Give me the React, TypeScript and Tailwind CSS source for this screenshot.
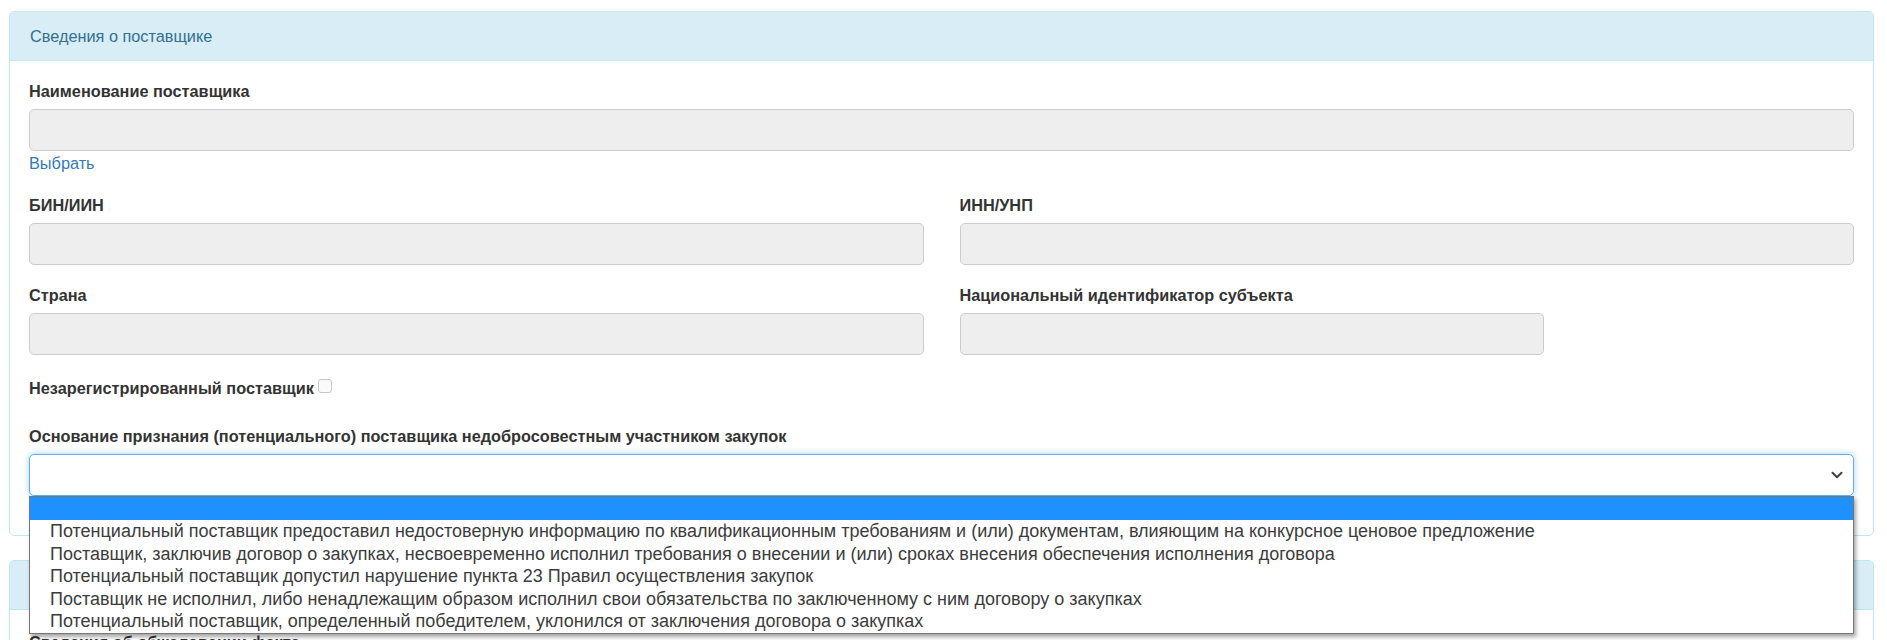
import { ChevronDown } from 'lucide-react';

const options = [
  'Потенциальный поставщик предоставил недостоверную информацию по квалификационным требованиям и (или) документам, влияющим на конкурсное ценовое предложение',
  'Поставщик, заключив договор о закупках, несвоевременно исполнил требования о внесении и (или) сроках внесения обеспечения исполнения договора',
  'Потенциальный поставщик допустил нарушение пункта 23 Правил осуществления закупок',
  'Поставщик не исполнил, либо ненадлежащим образом исполнил свои обязательства по заключенному с ним договору о закупках',
  'Потенциальный поставщик, определенный победителем, уклонился от заключения договора о закупках',
];

function Field({ label, className = '' }: { label: string; className?: string }) {
  return (
    <div className={`mb-[18px] ${className}`}>
      <div className="font-bold leading-[24px] mb-[6px]">{label}</div>
      <div className="h-[42px] bg-[#eeeeee] border border-[#cccccc] rounded-[5px]" />
    </div>
  );
}

export default function App() {
  return (
    <div className="h-[640px] overflow-hidden bg-white text-[#333] text-[16.3px] font-['Liberation_Sans',Arial,sans-serif]">
      <div className="pl-[9px] pr-[13px] pt-[11px]">
        {/* panel: supplier info */}
        <div className="border border-[#bce8f1] rounded-[5px] bg-white">
          <div className="h-[49px] flex items-center px-[20px] bg-[#d9edf7] text-[#31708f] border-b border-[#bce8f1] rounded-t-[4px]">
            Сведения о поставщике
          </div>
          <div className="px-[19px] pt-[18px] pb-[18px]">
            <div className="mb-[18px]">
              <div className="font-bold leading-[24px] mb-[6px]">Наименование поставщика</div>
              <div className="h-[42px] bg-[#eeeeee] border border-[#cccccc] rounded-[5px]" />
              <a className="block leading-[24px] text-[#337ab7]">Выбрать</a>
            </div>

            <div className="grid grid-cols-2 gap-x-[36px]">
              <Field label="БИН/ИИН" />
              <Field label="ИНН/УНП" />
              <Field label="Страна" />
              <div className="mb-[18px]">
                <div className="font-bold leading-[24px] mb-[6px]">Национальный идентификатор субъекта</div>
                <div className="h-[42px] w-[584px] bg-[#eeeeee] border border-[#cccccc] rounded-[5px]" />
              </div>
            </div>

            <div className="mt-[3px] mb-[24px] flex items-center leading-[24px] font-bold">
              Незарегистрированный поставщик
              <span className="ml-[4px] inline-block w-[14px] h-[14px] border border-[#c8c8c8] rounded-[3px] bg-[#fafafa] -mt-[4px]" />
            </div>

            <div className="relative mb-[21px]">
              <div className="font-bold leading-[24px] mb-[6px]">
                Основание признания (потенциального) поставщика недобросовестным участником закупок
              </div>
              <div className="h-[42px] border border-[#66afe9] rounded-[5px] bg-white shadow-[0_0_6px_rgba(102,175,233,0.6)] flex items-center justify-end pr-[7px]">
                <ChevronDown className="w-[18px] h-[18px] text-[#444]" strokeWidth={2.8} />
              </div>

              {/* open native-style option list */}
              <div className="absolute left-0 right-0 top-[72px] z-10 bg-white border border-[#767676] shadow-[2px_3px_4px_rgba(0,0,0,0.35)] text-[18px] text-[#3c3c3c]">
                <div className="h-[23px] bg-[#1e90ff]" />
                {options.map((o) => (
                  <div key={o} className="h-[22.6px] leading-[22.6px] pl-[20px] whitespace-nowrap">
                    {o}
                  </div>
                ))}
              </div>
            </div>
          </div>
        </div>

        {/* next panel, mostly covered by the list */}
        <div className="mt-[24px] border border-[#bce8f1] rounded-[5px] bg-white">
          <div className="h-[49px] flex items-center px-[20px] bg-[#d9edf7] text-[#31708f] border-b border-[#bce8f1] rounded-t-[4px]">
            Сведения о нарушении
          </div>
          <div className="px-[19px] pt-[20px]">
            <div className="font-bold leading-[24px]">Сведения об обжаловании факта</div>
          </div>
        </div>
      </div>
    </div>
  );
}
